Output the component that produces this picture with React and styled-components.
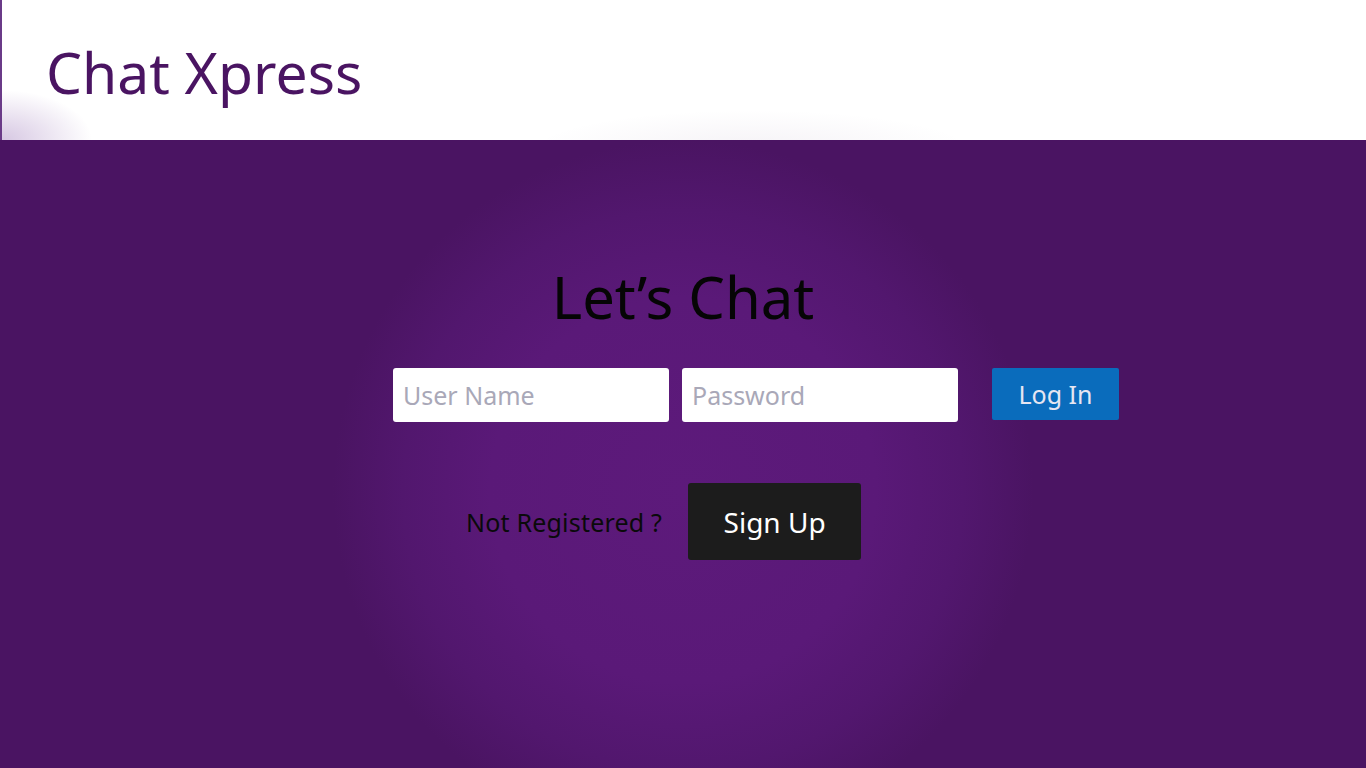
import React from "react";
import styled, { createGlobalStyle } from "styled-components";

const GlobalStyle = createGlobalStyle`
  html, body {
    margin: 0;
    padding: 0;
    height: 100%;
  }
  body {
    font-family: "Noto Sans", "Open Sans", sans-serif;
    background: #4a1462;
  }
  #root {
    height: 100%;
  }
`;

const Page = styled.div`
  display: flex;
  flex-direction: column;
  height: 768px;
  overflow: hidden;
`;

const Header = styled.header`
  height: 140px;
  flex-shrink: 0;
  display: flex;
  align-items: center;
  padding-left: 44px;
  box-sizing: border-box;
  border-left: 2px solid #6a3a88;
  background:
    radial-gradient(ellipse 90px 50px at 0 140px, rgba(120, 70, 160, 0.3), rgba(255, 255, 255, 0) 100%),
    radial-gradient(ellipse 220px 40px at 750px 150px, rgba(110, 70, 130, 0.07), rgba(255, 255, 255, 0) 100%),
    #ffffff;
`;

const Brand = styled.h1`
  margin: 4px 0 0 0;
  font-size: 57px;
  font-weight: 400;
  color: #4a1462;
`;

const Main = styled.main`
  flex: 1;
  display: flex;
  flex-direction: column;
  background: radial-gradient(
    circle 350px at 683px 350px,
    #5d1a7b 0%,
    #5a1978 55%,
    #52176e 80%,
    #4a1462 100%
  );
`;

const Title = styled.h2`
  margin: 121px 0 0 0;
  text-align: center;
  font-size: 58px;
  font-weight: 400;
  line-height: 72px;
  color: #050505;
`;

const FormRow = styled.div`
  display: flex;
  align-items: flex-start;
  padding-left: ${(p) => p.$indent}px;
  margin-top: ${(p) => p.$top}px;
`;

const Field = styled.input`
  width: 276px;
  height: 54px;
  box-sizing: border-box;
  border: none;
  border-radius: 3px;
  background: #ffffff;
  padding: 0 10px;
  margin-right: 13px;
  font-family: "Noto Sans", "Open Sans", sans-serif;
  font-size: 25px;
  color: #333;
  outline: none;
  &::placeholder {
    color: #a9a8b8;
  }
`;

const LoginButton = styled.button`
  margin-left: 21px;
  width: 127px;
  height: 52px;
  border: none;
  border-radius: 2px;
  background: #0a6cbc;
  color: #e6e6f2;
  font-family: "Noto Sans", "Open Sans", sans-serif;
  font-size: 25px;
  padding: 0;
  cursor: pointer;
`;

const Prompt = styled.span`
  font-size: 25px;
  letter-spacing: 0.2px;
  color: #0a0a0a;
  margin-top: 22px;
  margin-right: 26px;
`;

const SignUpButton = styled.button`
  width: 173px;
  height: 77px;
  border: none;
  border-radius: 3px;
  background: #1c1c1c;
  color: #ffffff;
  font-family: "Noto Sans", "Open Sans", sans-serif;
  font-size: 28px;
  padding: 0;
  cursor: pointer;
`;

const App = () => {
  return (
    <Page>
      <GlobalStyle />
      <Header>
        <Brand>Chat Xpress</Brand>
      </Header>
      <Main>
        <Title>Let’s Chat</Title>
        <FormRow $indent={393} $top={35}>
          <Field type="text" placeholder="User Name" />
          <Field type="password" placeholder="Password" />
          <LoginButton>Log In</LoginButton>
        </FormRow>
        <FormRow $indent={466} $top={61}>
          <Prompt>Not Registered ?</Prompt>
          <SignUpButton>Sign Up</SignUpButton>
        </FormRow>
      </Main>
    </Page>
  );
};

export default App;
